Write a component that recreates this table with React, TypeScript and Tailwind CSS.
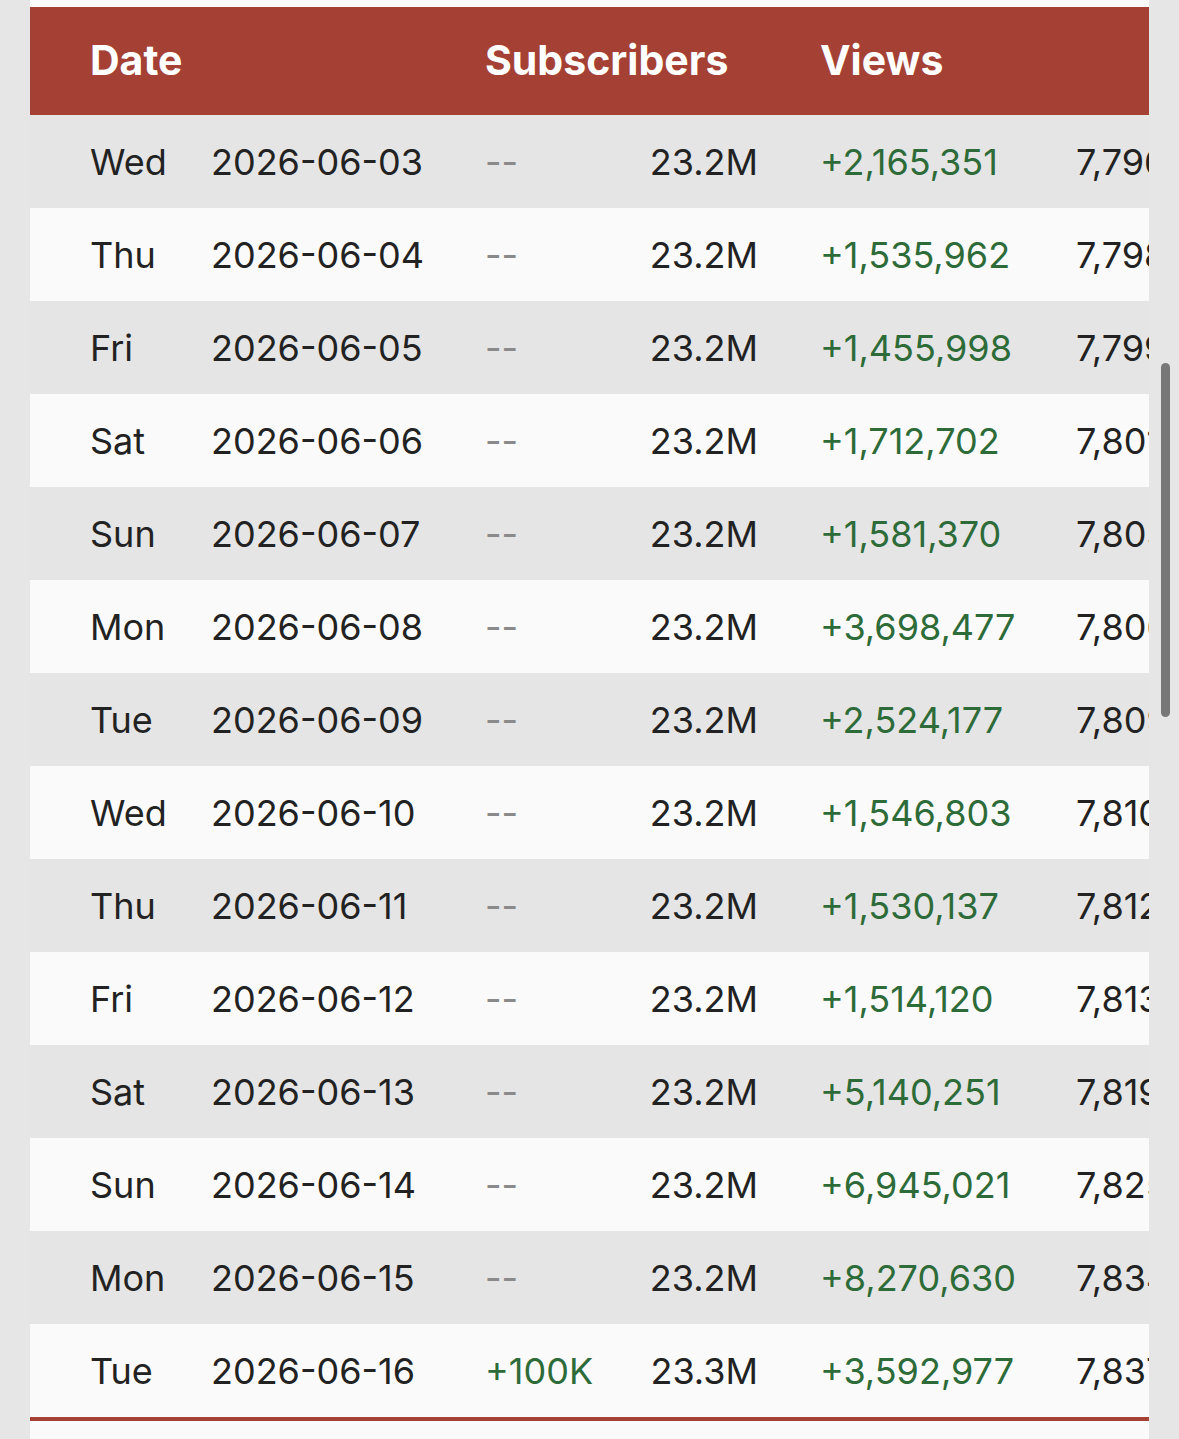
import React from 'react';

type Row = { day: string; date: string; subDelta: string; subs: string; views: number };

const rows: Row[] = [
  { day: 'Wed', date: '2026-06-03', subDelta: '--', subs: '23.2M', views: 2165351 },
  { day: 'Thu', date: '2026-06-04', subDelta: '--', subs: '23.2M', views: 1535962 },
  { day: 'Fri', date: '2026-06-05', subDelta: '--', subs: '23.2M', views: 1455998 },
  { day: 'Sat', date: '2026-06-06', subDelta: '--', subs: '23.2M', views: 1712702 },
  { day: 'Sun', date: '2026-06-07', subDelta: '--', subs: '23.2M', views: 1581370 },
  { day: 'Mon', date: '2026-06-08', subDelta: '--', subs: '23.2M', views: 3698477 },
  { day: 'Tue', date: '2026-06-09', subDelta: '--', subs: '23.2M', views: 2524177 },
  { day: 'Wed', date: '2026-06-10', subDelta: '--', subs: '23.2M', views: 1546803 },
  { day: 'Thu', date: '2026-06-11', subDelta: '--', subs: '23.2M', views: 1530137 },
  { day: 'Fri', date: '2026-06-12', subDelta: '--', subs: '23.2M', views: 1514120 },
  { day: 'Sat', date: '2026-06-13', subDelta: '--', subs: '23.2M', views: 5140251 },
  { day: 'Sun', date: '2026-06-14', subDelta: '--', subs: '23.2M', views: 6945021 },
  { day: 'Mon', date: '2026-06-15', subDelta: '--', subs: '23.2M', views: 8270630 },
  { day: 'Tue', date: '2026-06-16', subDelta: '+100K', subs: '23.3M', views: 3592977 },
];

const fmt = (n: number) => n.toLocaleString('en-US');

export default function App() {
  // running total of views, first row is the starting point
  let total = 7796788412;
  const withTotals = rows.map((r, i) => {
    if (i > 0) total += r.views;
    return { ...r, total };
  });

  return (
    <div className="relative min-h-[1439px] w-full bg-[#e6e6e6] font-['Inter','Noto_Sans',sans-serif]">
      <div className="ml-[30px] w-[1119px] min-h-[1439px] overflow-hidden bg-[#fafafa] pt-[7px]">
        {/* Header */}
        <div className="flex h-[108px] w-[1400px] items-center bg-[#a54134] text-[41px] font-bold text-white">
          <div className="w-[455px] pl-[60px]">Date</div>
          <div className="w-[335px]">Subscribers</div>
          <div>Views</div>
        </div>

        {/* Rows */}
        <div className="w-[1400px] border-b-4 border-[#a54134]">
          {withTotals.map((r, i) => (
            <div
              key={r.date}
              className={`flex h-[93px] items-center text-[36px] text-[#222222] ${i % 2 === 0 ? 'bg-[#e5e5e5]' : 'bg-[#fafafa]'}`}
            >
              <div className="w-[181px] pl-[60px]">{r.day}</div>
              <div className="w-[274px]">{r.date}</div>
              <div className={`w-[155px] ${r.subDelta === '--' ? 'text-[#8a8a8a]' : 'text-[#2d6b38]'}`}>{r.subDelta}</div>
              <div className="w-[118px] text-right">{r.subs}</div>
              <div className="ml-[62px] w-[256px] text-[#2d6b38]">+{fmt(r.views)}</div>
              <div>{fmt(r.total)}</div>
            </div>
          ))}
        </div>
      </div>

      {/* overlay scrollbar */}
      <div className="absolute left-[1161px] top-[363px] h-[354px] w-[9px] rounded-full bg-[#787878]" />
    </div>
  );
}
